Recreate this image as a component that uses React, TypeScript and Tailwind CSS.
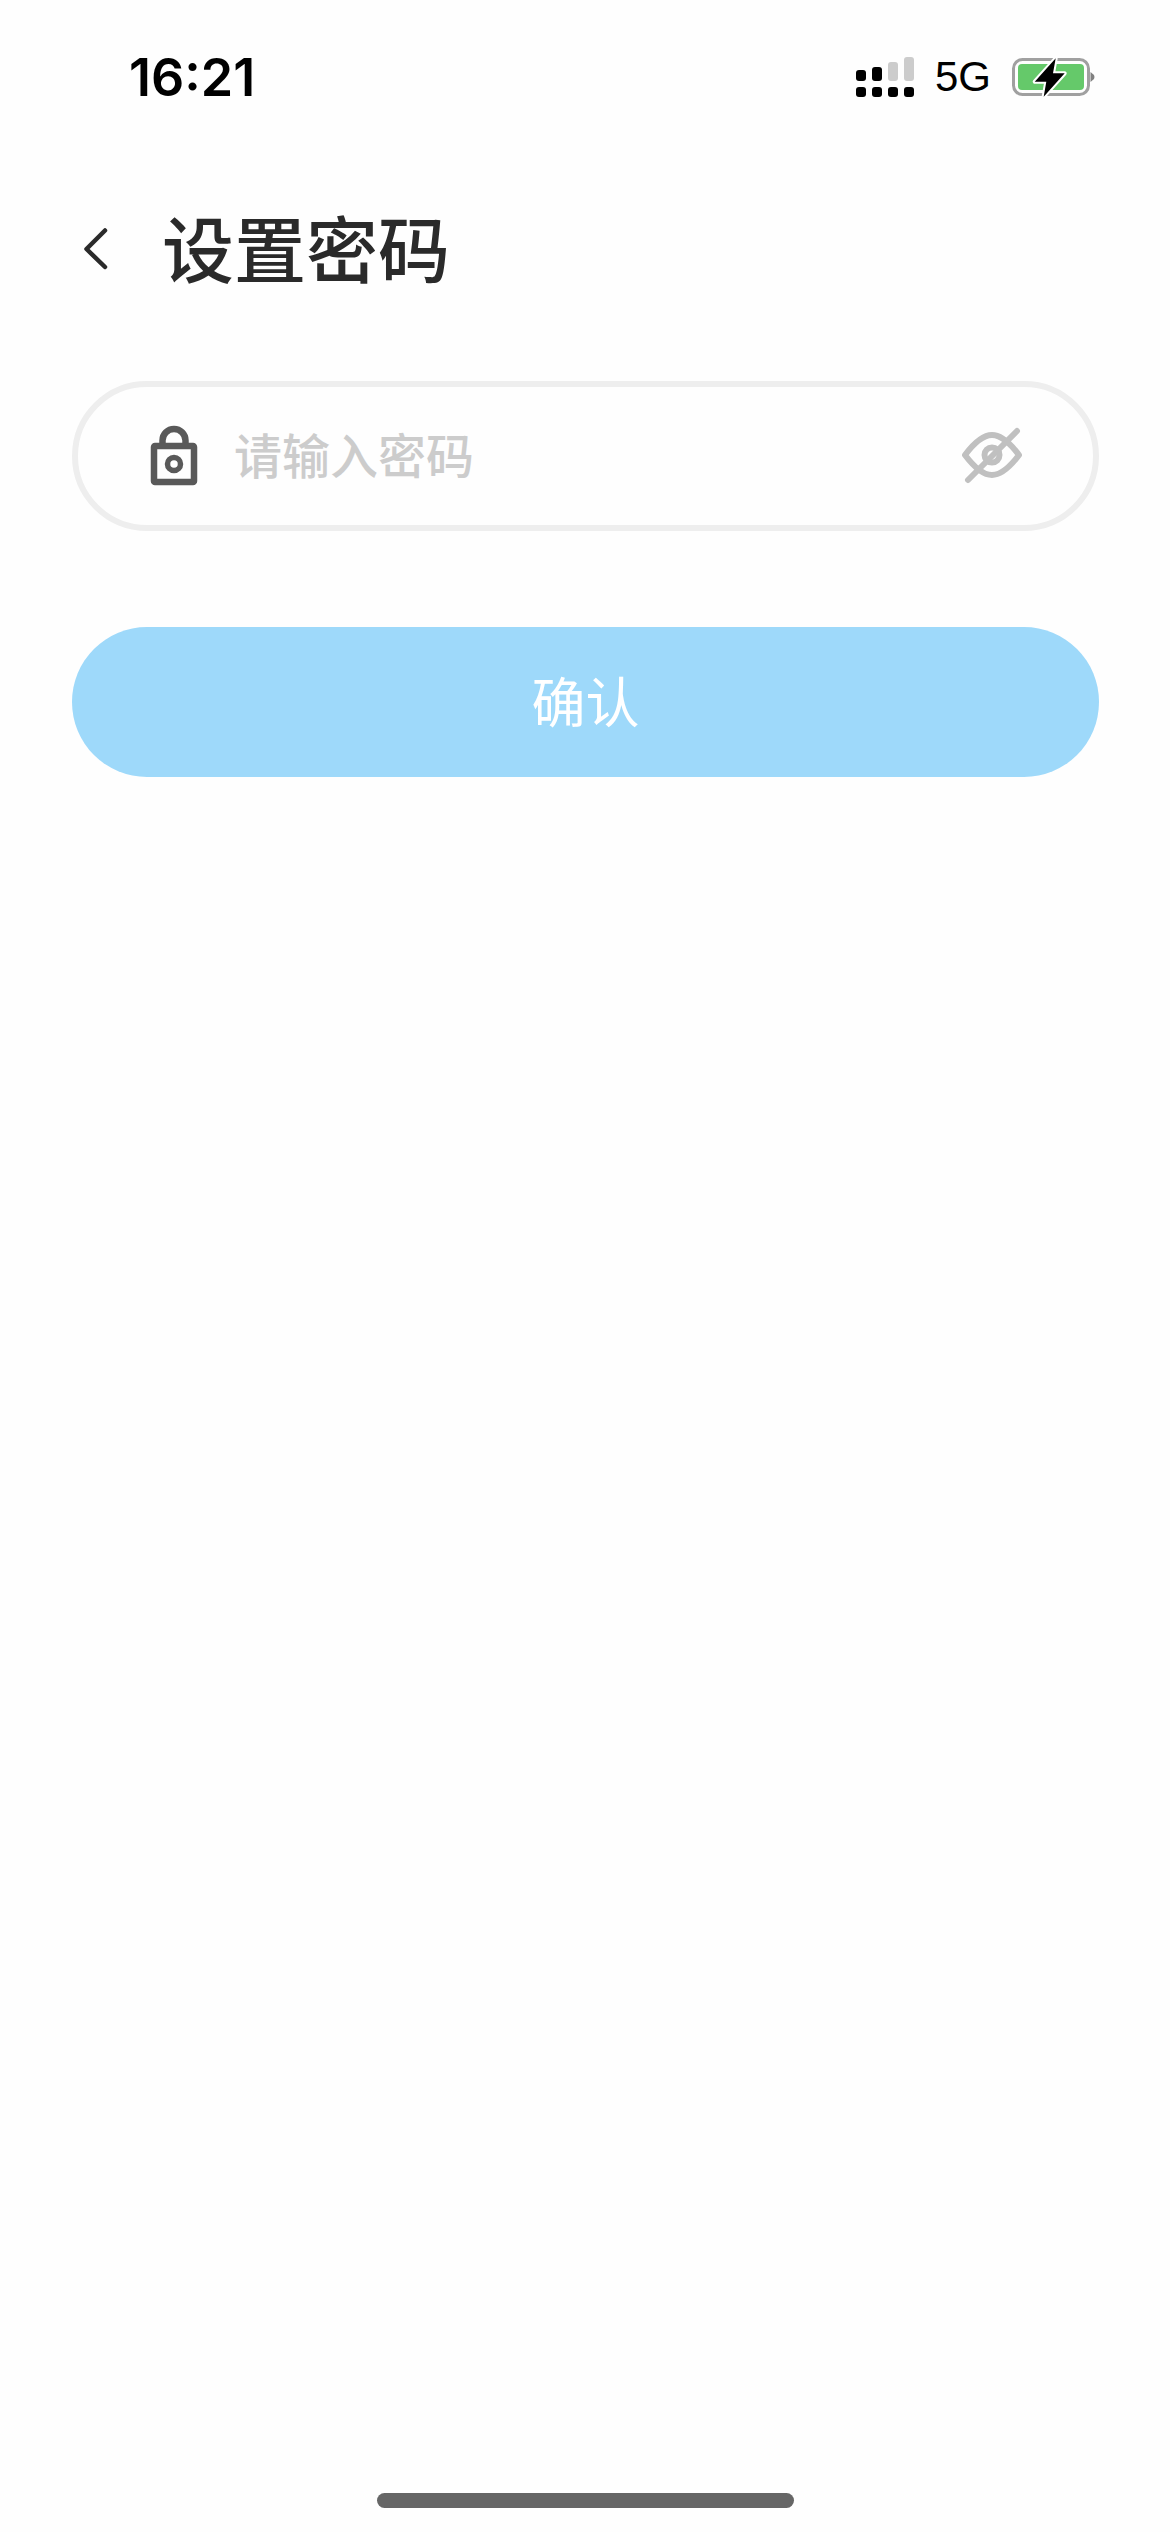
const cjk = "font-['Noto_Sans_CJK_SC',sans-serif]";

const SignalIcon = () => (
  <svg width="70" height="50" viewBox="0 0 70 50" className="block">
    <rect x="6" y="37" width="10" height="10" rx="3" fill="#000" />
    <rect x="22" y="37" width="10" height="10" rx="3" fill="#000" />
    <rect x="38" y="37" width="10" height="10" rx="3" fill="#000" />
    <rect x="54" y="37" width="10" height="10" rx="3" fill="#000" />
    <rect x="6" y="20" width="10" height="11" rx="3" fill="#000" />
    <rect x="22" y="17" width="10" height="14" rx="3" fill="#000" />
    <rect x="38" y="12" width="10" height="19" rx="3" fill="#cccccc" />
    <rect x="54" y="7" width="10" height="24" rx="3" fill="#cccccc" />
  </svg>
);

const BatteryIcon = () => (
  <svg width="90" height="50" viewBox="0 0 90 50" className="block">
    <rect x="5.5" y="9.5" width="75" height="35" rx="9" fill="none" stroke="#a0a0a0" strokeWidth="3" />
    <rect x="10" y="14" width="66" height="26" rx="4" fill="#65c96a" />
    <path d="M82.5 22 L86 25 Q87 27 86 29 L82.5 32 Z" fill="#808080" />
    <path
      d="M47.7 8.3 L26.7 31.7 L38.3 31.7 L35.7 46.7 L56.7 23.3 L45 23.3 Z"
      fill="#000"
      stroke="#fff"
      strokeWidth="4"
      strokeLinejoin="round"
      paintOrder="stroke"
    />
  </svg>
);

const BackIcon = () => (
  <svg width="32" height="56" viewBox="0 0 32 56" className="block">
    <path d="M24 8.5 L5.5 27 L24 45" fill="none" stroke="#2a2a2a" strokeWidth="4.5" strokeLinecap="round" strokeLinejoin="round" />
  </svg>
);

const LockIcon = () => (
  <svg width="58" height="66" viewBox="0 0 58 66" className="block">
    <path d="M17.5 23 V17.5 a11.5 11.5 0 0 1 23 0 V23" fill="none" stroke="#595959" strokeWidth="6.5" />
    <rect x="9" y="23" width="40" height="36" rx="1" fill="none" stroke="#595959" strokeWidth="6.5" strokeLinejoin="round" />
    <circle cx="29" cy="41" r="6.5" fill="none" stroke="#595959" strokeWidth="5.5" />
  </svg>
);

const EyeOffIcon = () => (
  <svg width="70" height="64" viewBox="0 0 70 64" className="block">
    <path
      d="M8 31 C17 19 26 11 35 11 S53 19 62 31 C53 43 44 51 35 51 S17 43 8 31 Z"
      fill="none"
      stroke="#c0c0c0"
      strokeWidth="6"
      strokeLinejoin="round"
    />
    <circle cx="35" cy="31" r="7.5" fill="none" stroke="#c0c0c0" strokeWidth="6" />
    <path d="M60 7 L11 56" stroke="#c0c0c0" strokeWidth="6" strokeLinecap="round" />
  </svg>
);

export default function App() {
  return (
    <div className="flex h-[2532px] w-full flex-col bg-[#fefefe]">
      {/* status bar */}
      <div className="mt-[50px] flex h-[50px] items-center pl-[129px] pr-[72px]">
        <span className="pt-[5px] font-['Inter',sans-serif] text-[52px] font-semibold leading-none text-black">16:21</span>
        <div className="ml-auto flex items-center">
          <SignalIcon />
          <span className="ml-[15px] pt-[3px] font-['Liberation_Sans',sans-serif] text-[42px] leading-none text-black">5G</span>
          <div className="ml-[17px]">
            <BatteryIcon />
          </div>
        </div>
      </div>

      {/* header */}
      <div className="mt-[100px] flex h-[100px] items-center pl-[81px]">
        <BackIcon />
        <h1 className={`ml-[49px] pb-[9px] text-[72px] font-medium leading-none text-[#2a2a2a] ${cjk}`}>设置密码</h1>
      </div>

      {/* password field */}
      <div className="ml-[72px] mr-[71px] mt-[81px] flex h-[150px] items-center rounded-full border-[6px] border-[#eeeeee] pl-[67px] pr-[66px]">
        <LockIcon />
        <span className={`ml-[31px] pb-[6px] text-[48px] font-medium leading-none text-[#cccccc] ${cjk}`}>请输入密码</span>
        <div className="ml-auto">
          <EyeOffIcon />
        </div>
      </div>

      {/* confirm */}
      <button className={`ml-[72px] mr-[71px] mt-[96px] flex h-[150px] items-center justify-center rounded-full bg-[#9ed9fa] pb-[5px] text-[54px] font-normal leading-none text-white ${cjk}`}>
        确认
      </button>

      <div className="mx-auto mb-[24px] mt-auto h-[15px] w-[417px] rounded-full bg-[#666666]" />
    </div>
  );
}
